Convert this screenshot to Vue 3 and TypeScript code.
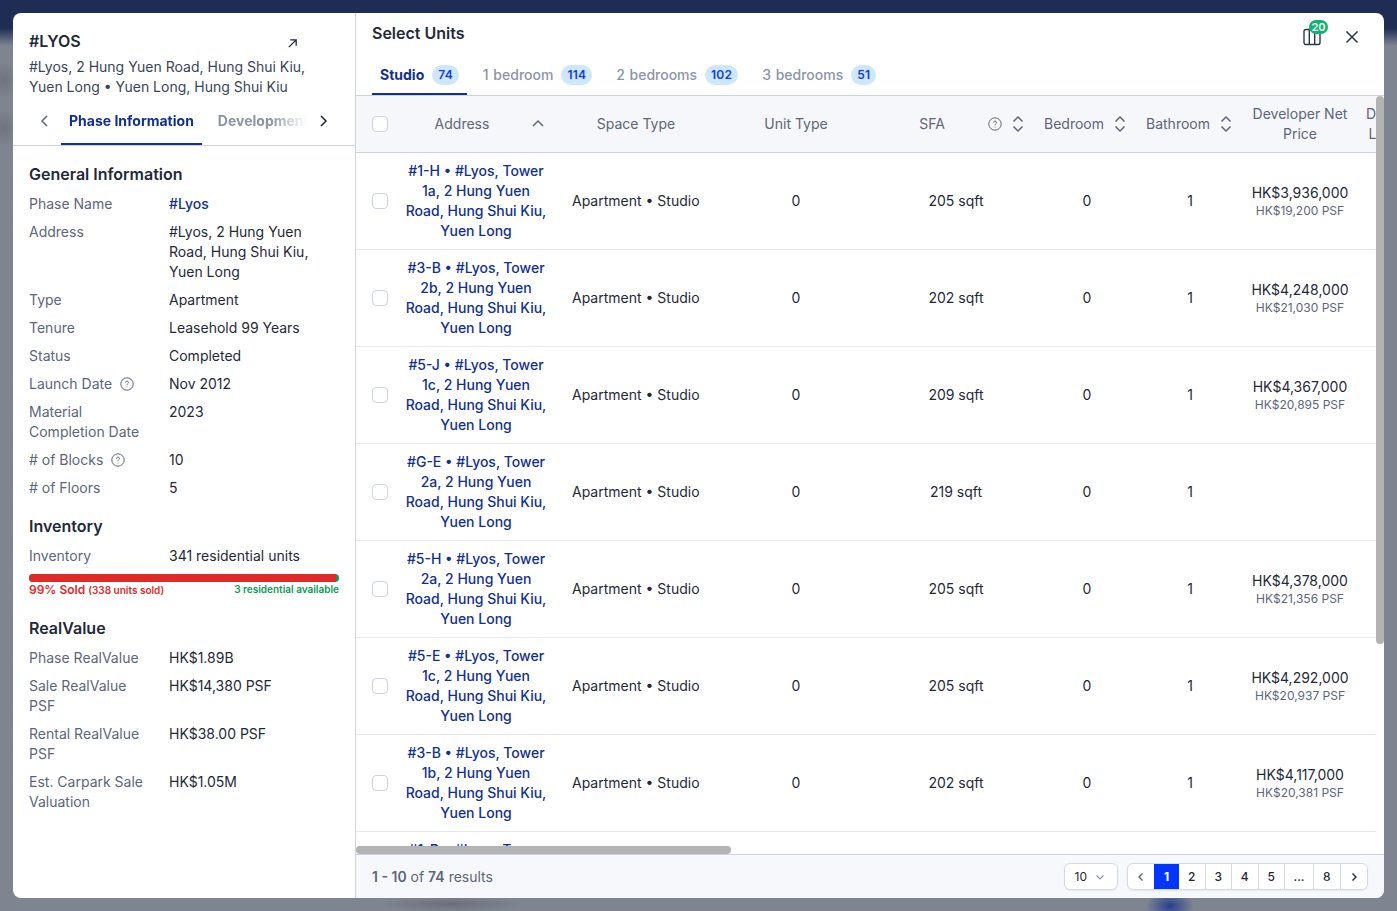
<script setup lang="ts">
interface InfoRow {
  label: string
  value: string
  link?: boolean
  hint?: boolean
}

interface Unit {
  unit: string
  tower: string
  sfa: number
  price?: string
  psf?: string
}

const generalInfo: InfoRow[] = [
  { label: 'Phase Name', value: '#Lyos', link: true },
  { label: 'Address', value: '#Lyos, 2 Hung Yuen Road, Hung Shui Kiu, Yuen Long' },
  { label: 'Type', value: 'Apartment' },
  { label: 'Tenure', value: 'Leasehold 99 Years' },
  { label: 'Status', value: 'Completed' },
  { label: 'Launch Date', value: 'Nov 2012', hint: true },
  { label: 'Material Completion Date', value: '2023' },
  { label: '# of Blocks', value: '10', hint: true },
  { label: '# of Floors', value: '5' },
]

const realValue: InfoRow[] = [
  { label: 'Phase RealValue', value: 'HK$1.89B' },
  { label: 'Sale RealValue PSF', value: 'HK$14,380 PSF' },
  { label: 'Rental RealValue PSF', value: 'HK$38.00 PSF' },
  { label: 'Est. Carpark Sale Valuation', value: 'HK$1.05M' },
]

const unitTabs = [
  { name: 'Studio', count: 74 },
  { name: '1 bedroom', count: 114 },
  { name: '2 bedrooms', count: 102 },
  { name: '3 bedrooms', count: 51 },
]

const units: Unit[] = [
  { unit: '#1-H', tower: '1a', sfa: 205, price: 'HK$3,936,000', psf: 'HK$19,200 PSF' },
  { unit: '#3-B', tower: '2b', sfa: 202, price: 'HK$4,248,000', psf: 'HK$21,030 PSF' },
  { unit: '#5-J', tower: '1c', sfa: 209, price: 'HK$4,367,000', psf: 'HK$20,895 PSF' },
  { unit: '#G-E', tower: '2a', sfa: 219 },
  { unit: '#5-H', tower: '2a', sfa: 205, price: 'HK$4,378,000', psf: 'HK$21,356 PSF' },
  { unit: '#5-E', tower: '1c', sfa: 205, price: 'HK$4,292,000', psf: 'HK$20,937 PSF' },
  { unit: '#3-B', tower: '1b', sfa: 202, price: 'HK$4,117,000', psf: 'HK$20,381 PSF' },
  { unit: '#1-D', tower: '1a', sfa: 205 },
]

const pages = ['1', '2', '3', '4', '5', '...', '8']
</script>

<template>
  <div class="page">
    <div class="modal">
      <aside class="side">
        <header class="side__head">
          <div class="side__title-row">
            <h2 class="side__title">#LYOS</h2>
            <svg class="side__open" width="11" height="11" viewBox="0 0 12 12" fill="none" stroke="#1f2937" stroke-width="1.400">
              <path d="M2 10 10 2M3.500 2H10v6.500" />
            </svg>
          </div>
          <p class="side__address">#Lyos, 2 Hung Yuen Road, Hung Shui Kiu, Yuen Long • Yuen Long, Hung Shui Kiu</p>
          <div class="side__tabs">
            <span class="side__arrow">
              <svg width="12" height="14" viewBox="0 0 12 14" fill="none" stroke="#5d6679" stroke-width="1.500"><path d="M8 2 3 7l5 5" /></svg>
            </span>
            <div class="side__tablist">
              <span class="side__tab side__tab--active">Phase Information</span>
              <span class="side__tab">Development</span>
            </div>
            <span class="side__arrow">
              <svg width="12" height="14" viewBox="0 0 12 14" fill="none" stroke="#1f2937" stroke-width="1.500"><path d="m4 2 5 5-5 5" /></svg>
            </span>
          </div>
        </header>

        <div class="side__body">
          <h3 class="section-title">General Information</h3>
          <dl class="info">
            <template v-for="row in generalInfo" :key="row.label">
              <dt class="info__label">
                {{ row.label }}
                <svg v-if="row.hint" class="hint" width="14" height="14" viewBox="0 0 14 14" fill="none" stroke="#5d6679" stroke-width="1">
                  <circle cx="7" cy="7" r="6.200" />
                  <path d="M5.500 5.600c0-.9.700-1.500 1.500-1.500s1.500.6 1.500 1.400c0 1.200-1.500 1.200-1.500 2.400" />
                  <path d="M7 9.500v.8" />
                </svg>
              </dt>
              <dd class="info__value" :class="{ 'info__value--link': row.link }">{{ row.value }}</dd>
            </template>
          </dl>

          <h3 class="section-title section-title--next">Inventory</h3>
          <dl class="info">
            <dt class="info__label">Inventory</dt>
            <dd class="info__value">341 residential units</dd>
          </dl>
          <div class="stock">
            <div class="stock__sold"></div>
          </div>
          <div class="stock__legend">
            <span class="stock__red">99% Sold <small>(338 units sold)</small></span>
            <span class="stock__green">3 residential available</span>
          </div>

          <h3 class="section-title section-title--next">RealValue</h3>
          <dl class="info">
            <template v-for="row in realValue" :key="row.label">
              <dt class="info__label">{{ row.label }}</dt>
              <dd class="info__value">{{ row.value }}</dd>
            </template>
          </dl>
        </div>
      </aside>

      <main class="main">
        <header class="main__head">
          <div class="main__title-row">
            <h2 class="main__title">Select Units</h2>
            <div class="main__actions">
              <span class="columns">
                <svg width="18" height="18" viewBox="0 0 18 18" fill="none" stroke="#2b3549" stroke-width="1.400">
                  <rect x="1" y="1.500" width="16" height="15" rx="2" />
                  <path d="M6.300 1.500v15M11.700 1.500v15" />
                </svg>
                <b class="columns__badge">20</b>
              </span>
              <svg width="14" height="14" viewBox="0 0 14 14" fill="none" stroke="#2b3549" stroke-width="1.500">
                <path d="m1.500 1.500 11 11M12.500 1.500l-11 11" />
              </svg>
            </div>
          </div>
          <nav class="unit-tabs">
            <span v-for="(tab, i) in unitTabs" :key="tab.name" class="unit-tab" :class="{ 'unit-tab--active': i === 0 }">
              {{ tab.name }}
              <b class="unit-tab__count">{{ tab.count }}</b>
            </span>
          </nav>
        </header>

        <div class="grid-area">
          <div class="grid-clip">
            <table class="units">
              <colgroup>
                <col class="col-check" />
                <col class="col-wide" />
                <col class="col-wide" />
                <col class="col-wide" />
                <col class="col-wide" />
                <col class="col-bed" />
                <col class="col-bath" />
                <col class="col-price" />
                <col class="col-list" />
              </colgroup>
              <thead>
                <tr>
                  <th class="units__check"><span class="checkbox"></span></th>
                  <th>
                    <div class="th-in th-in--address">
                      <span class="th-in__label">Address</span>
                      <svg width="16" height="16" viewBox="0 0 16 16" fill="none" stroke="#5d6679" stroke-width="1.500"><path d="m3 10 5-5 5 5" /></svg>
                    </div>
                  </th>
                  <th>Space Type</th>
                  <th>Unit Type</th>
                  <th>
                    <div class="th-in">
                      <span class="th-in__label">SFA</span>
                      <svg width="14" height="14" viewBox="0 0 14 14" fill="none" stroke="#5d6679" stroke-width="1">
                        <circle cx="7" cy="7" r="6.200" />
                        <path d="M5.500 5.600c0-.9.700-1.500 1.500-1.500s1.500.6 1.500 1.400c0 1.200-1.500 1.200-1.500 2.400" />
                        <path d="M7 9.500v.8" />
                      </svg>
                      <svg width="16" height="18" viewBox="0 0 16 18" fill="none" stroke="#5d6679" stroke-width="1.500"><path d="m3.500 6.500 4.500-4.500 4.500 4.500M3.500 11.500 8 16l4.500-4.500" /></svg>
                    </div>
                  </th>
                  <th>
                    <div class="th-in">
                      <span class="th-in__label">Bedroom</span>
                      <svg width="16" height="18" viewBox="0 0 16 18" fill="none" stroke="#5d6679" stroke-width="1.500"><path d="m3.500 6.500 4.500-4.500 4.500 4.500M3.500 11.500 8 16l4.500-4.500" /></svg>
                    </div>
                  </th>
                  <th>
                    <div class="th-in th-in--bath">
                      <span class="th-in__label">Bathroom</span>
                      <svg width="16" height="18" viewBox="0 0 16 18" fill="none" stroke="#5d6679" stroke-width="1.500"><path d="m3.500 6.500 4.500-4.500 4.500 4.500M3.500 11.500 8 16l4.500-4.500" /></svg>
                    </div>
                  </th>
                  <th>Developer Net Price</th>
                  <th>Developer List Price</th>
                </tr>
              </thead>
              <tbody>
                <tr v-for="(u, i) in units" :key="i">
                  <td class="units__check"><span class="checkbox"></span></td>
                  <td class="units__address">{{ u.unit }} • #Lyos, Tower {{ u.tower }}, 2 Hung Yuen Road, Hung Shui Kiu, Yuen Long</td>
                  <td class="units__nowrap">Apartment • Studio</td>
                  <td>0</td>
                  <td>{{ u.sfa }} sqft</td>
                  <td>0</td>
                  <td>1</td>
                  <td>
                    <template v-if="u.price">
                      <div>{{ u.price }}</div>
                      <div class="units__psf">{{ u.psf }}</div>
                    </template>
                  </td>
                  <td></td>
                </tr>
              </tbody>
            </table>
          </div>
          <div class="track-y"><div class="thumb-y"></div></div>
          <div class="track-x"><div class="thumb-x"></div></div>
        </div>

        <footer class="foot">
          <span class="foot__count"><b>1 - 10</b> of <b>74</b> results</span>
          <div class="foot__controls">
            <span class="size-select">
              10
              <svg width="10" height="10" viewBox="0 0 10 10" fill="none" stroke="#8a94a8" stroke-width="1.200"><path d="m1.500 3.500 3.500 3.500 3.500-3.500" /></svg>
            </span>
            <div class="pager">
              <span class="pager__cell pager__cell--edge">
                <svg width="10" height="10" viewBox="0 0 10 10" fill="none" stroke="#5d6679" stroke-width="1.400"><path d="M6.500 1.500 3 5l3.500 3.500" /></svg>
              </span>
              <span
                v-for="(p, i) in pages"
                :key="p"
                class="pager__cell"
                :class="{ 'pager__cell--active': i === 0, 'pager__cell--gap': p === '...' }"
              >{{ p }}</span>
              <span class="pager__cell pager__cell--edge">
                <svg width="10" height="10" viewBox="0 0 10 10" fill="none" stroke="#1f2937" stroke-width="1.400"><path d="M3.500 1.500 7 5 3.500 8.500" /></svg>
              </span>
            </div>
          </div>
        </footer>
      </main>
    </div>
  </div>
</template>

<style>
html,
body {
  margin: 0;
  background: #80858f;
}
</style>

<style scoped>
.page {
  box-sizing: border-box;
  height: 911px;
  padding: 13px;
  overflow: hidden;
  font-family: Inter, 'Liberation Sans', sans-serif;
  font-size: 14px;
  line-height: 20px;
  color: #1f2937;
  background:
    radial-gradient(ellipse 14px 18px at 4px 80px, #6f747e, transparent),
    radial-gradient(ellipse 14px 18px at 4px 128px, #6f747e, transparent),
    radial-gradient(ellipse 24px 16px at 1170px 906px, #27408c, transparent),
    radial-gradient(ellipse 70px 8px at 450px 904px, #6a6f7a, transparent),
    linear-gradient(#1f2d55 0, #1f2d55 28px, #7f8590 46px);
}

.modal {
  display: flex;
  height: 885px;
  border-radius: 8px;
  overflow: hidden;
  background: #fff;
}

.side {
  box-sizing: border-box;
  flex: 0 0 343px;
  width: 343px;
  min-width: 0;
  border-right: 1px solid #ccd2e0;
}

.side__head {
  padding: 16px 16px 0;
  border-bottom: 1px solid #ccd2e0;
  margin-bottom: 16px;
}

.side__title-row {
  display: flex;
  align-items: center;
  justify-content: space-between;
  padding-right: 41px;
}

.side__title {
  margin: 0;
  font-size: 16px;
  line-height: 24px;
  font-weight: 600;
}

.side__open {
  margin-top: 4px;
}

.side__address {
  margin: 4px 0 0;
  color: #3a4458;
}

.side__tabs {
  display: flex;
  height: 48px;
  align-items: stretch;
}

.side__arrow {
  flex: 0 0 32px;
  display: flex;
  align-items: center;
  justify-content: center;
}

.side__tablist {
  flex: 1;
  min-width: 0;
  display: flex;
  gap: 8px;
  overflow: hidden;
  -webkit-mask-image: linear-gradient(90deg, #000 85%, transparent 100%);
  mask-image: linear-gradient(90deg, #000 85%, transparent 100%);
}

.side__tab {
  flex: none;
  padding: 0 8px;
  line-height: 48px;
  font-weight: 700;
  color: #8a94a8;
  white-space: nowrap;
}

.side__tab--active {
  color: #12308f;
  box-shadow: inset 0 -2px 0 #12308f;
}

.side__body {
  padding: 0 16px;
}

.section-title {
  margin: 0 0 8px;
  font-size: 16px;
  line-height: 24px;
  font-weight: 600;
}

.section-title--next {
  margin-top: 16px;
}

.info {
  display: grid;
  grid-template-columns: 124px 1fr;
  gap: 8px 16px;
  margin: 0;
}

.info__label {
  color: #5d6679;
}

.hint {
  margin-left: 4px;
  vertical-align: -2px;
}

.info__value {
  margin: 0;
}

.info__value--link {
  color: #12308f;
  font-weight: 500;
}

.stock {
  height: 8px;
  margin-top: 8px;
  border-radius: 4px;
  background: #0c9a56;
  overflow: hidden;
}

.stock__sold {
  width: 99%;
  height: 100%;
  background: #e02a2a;
}

.stock__legend {
  display: flex;
  justify-content: space-between;
  font-weight: 600;
  line-height: 16px;
  margin-bottom: 18px;
}

.stock__legend + .section-title--next {
  margin-top: 0;
}

.stock__red {
  font-size: 12px;
  color: #e02a2a;
}

.stock__red small {
  font-size: 10px;
}

.stock__green {
  font-size: 10px;
  line-height: 14px;
  color: #0c9a56;
}

.main {
  flex: 1;
  min-width: 0;
  display: flex;
  flex-direction: column;
}

.main__head {
  padding: 8px 16px 0;
  border-bottom: 1px solid #ccd2e0;
}

.main__title-row {
  display: flex;
  justify-content: space-between;
  height: 24px;
  margin-bottom: 10px;
}

.main__title {
  margin: 0;
  font-size: 16px;
  line-height: 24px;
  font-weight: 600;
}

.main__actions {
  display: flex;
  align-items: center;
  gap: 24px;
  padding: 4px 9px 0 0;
  height: 24px;
}

.columns {
  position: relative;
  display: block;
  width: 18px;
  height: 18px;
}

.columns__badge {
  position: absolute;
  left: 6px;
  top: -8px;
  width: 19px;
  height: 14px;
  border-radius: 7px;
  background: #0fb36e;
  color: #fff;
  font-size: 11px;
  font-weight: 600;
  line-height: 14px;
  text-align: center;
}

.unit-tabs {
  display: flex;
  gap: 8px;
  height: 40px;
}

.unit-tab {
  display: flex;
  align-items: center;
  gap: 8px;
  padding: 0 8px;
  font-weight: 500;
  word-spacing: 1px;
  color: #8a94a8;
}

.unit-tab--active {
  font-weight: 700;
  color: #12308f;
  box-shadow: inset 0 -2px 0 #12308f;
}

.unit-tab__count {
  padding: 0 6px;
  border-radius: 10px;
  background: #cfe6ff;
  color: #0a40d8;
  font-size: 12px;
  font-weight: 600;
  letter-spacing: 0.2px;
  line-height: 20px;
}

.grid-area {
  flex: 1;
  min-height: 0;
  display: grid;
  grid-template-columns: minmax(0, 1fr) 8px;
  grid-template-rows: minmax(0, 1fr) 8px;
}

.grid-clip {
  overflow: hidden;
  min-width: 0;
  min-height: 0;
}

.track-y {
  grid-row: 1 / 3;
}

.thumb-y {
  height: 548px;
  border-radius: 4px;
  background: #b3b3b3;
}

.track-x {
  grid-column: 1;
  grid-row: 2;
}

.thumb-x {
  width: 375px;
  height: 8px;
  border-radius: 4px;
  background: #b3b3b3;
}

.units {
  table-layout: fixed;
  width: 1084px;
  border-collapse: separate;
  border-spacing: 0;
}

.col-check {
  width: 40px;
}

.col-wide {
  width: 160px;
}

.col-bed {
  width: 102px;
}

.col-bath {
  width: 104px;
}

.col-price {
  width: 116px;
}

.col-list {
  width: 82px;
}

.units th {
  box-sizing: border-box;
  height: 57px;
  padding: 0 8px;
  background: #f6f7fa;
  border-bottom: 1px solid #ccd2e0;
  color: #5d6679;
  font-weight: 400;
  text-align: center;
}

.units td {
  padding: 8px;
  border-bottom: 1px solid #e6e8ee;
  text-align: center;
}

.th-in {
  display: flex;
  align-items: center;
  gap: 8px;
  padding-right: 2px;
}

.th-in--address {
  gap: 10px;
}

.th-in--bath {
  padding-right: 0;
}

.th-in__label {
  flex: 1;
}

.units .units__check {
  padding: 0 0 0 16px;
  text-align: left;
}

.checkbox {
  display: block;
  box-sizing: border-box;
  width: 16px;
  height: 16px;
  border: 1px solid #ccd2e0;
  border-radius: 4px;
  background: #fff;
}

.units__address {
  color: #12308f;
  font-weight: 500;
}

.units .units__nowrap {
  padding: 8px 16px;
  text-align: left;
  white-space: nowrap;
}

.units__psf {
  font-size: 12px;
  line-height: 16px;
  color: #5d6679;
}

.foot {
  box-sizing: border-box;
  height: 44px;
  flex: none;
  display: flex;
  align-items: center;
  justify-content: space-between;
  padding: 0 16px;
  background: #f7f8fb;
  border-top: 1px solid #ccd2e0;
  color: #5d6679;
}

.foot__count b {
  font-weight: 600;
}

.foot__controls {
  display: flex;
  gap: 9px;
}

.size-select {
  box-sizing: border-box;
  display: flex;
  align-items: center;
  justify-content: space-between;
  width: 54px;
  height: 27px;
  padding: 0 12px 0 10px;
  border: 1px solid #d5d9e4;
  border-radius: 6px;
  background: #fff;
  box-shadow: 0 1px 2px rgba(16, 24, 40, 0.06);
  color: #1f2937;
  font-size: 12px;
}

.pager {
  display: flex;
  height: 27px;
  box-sizing: border-box;
  border: 1px solid #d5d9e4;
  border-radius: 6px;
  background: #fff;
  box-shadow: 0 1px 2px rgba(16, 24, 40, 0.06);
  overflow: hidden;
}

.pager__cell {
  display: flex;
  align-items: center;
  justify-content: center;
  width: 26.500px;
  border-right: 1px solid #d5d9e4;
  box-sizing: border-box;
  color: #1f2937;
  font-size: 12px;
  font-weight: 500;
}

.pager__cell:last-child {
  border-right: 0;
}

.pager__cell--edge:first-child {
  border-right: 0;
}

.pager__cell--active {
  width: 25px;
  border-right: 0;
  background: #0036ff;
  color: #fff;
  font-weight: 700;
}

.pager__cell--gap {
  width: 29px;
}
</style>
